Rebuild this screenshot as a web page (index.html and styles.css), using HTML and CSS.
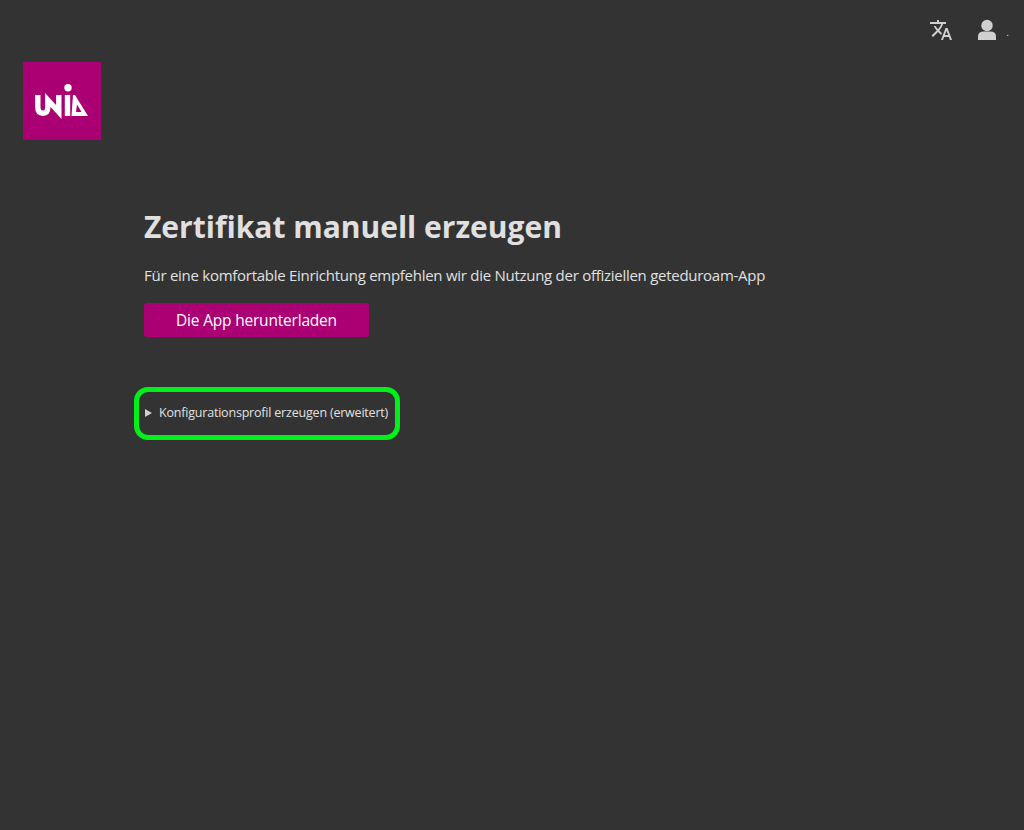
FILE: index.html
```html
<!DOCTYPE html>
<html lang="de">
<head>
<meta charset="utf-8">
<title>Zertifikat manuell erzeugen</title>
<link rel="stylesheet" href="styles.css">
</head>
<body>
<header class="topbar">
  <button class="icon-btn" aria-label="Sprache">
    <svg viewBox="0 0 24 24" width="24" height="24"><path d="M12.87 15.07l-2.54-2.51.03-.03A17.52 17.52 0 0 0 14.07 6H17V4h-7V2H8v2H1v1.99h11.17C11.5 7.92 10.44 9.75 9 11.35 8.07 10.32 7.3 9.19 6.69 8h-2c.73 1.63 1.73 3.17 2.98 4.56l-5.09 5.02L4 19l5-5 3.11 3.11.76-2.04zM18.5 10h-2L12 22h2l1.12-3h4.75L21 22h2l-4.5-12zm-2.62 7l1.62-4.33L19.12 17h-3.24z"/></svg>
  </button>
  <button class="icon-btn user-btn" aria-label="Konto">
    <svg viewBox="0 0 20 22" width="20" height="22"><circle cx="10" cy="6.500" r="5.700"/><path d="M1 21V17.500Q1 12.500 7 12.500H13Q19 12.500 19 17.500V21Z"/></svg>
    <span class="user-name">.</span>
  </button>
</header>
<div class="logo">
  <svg viewBox="0 0 78 78" width="78" height="78">
    <rect width="78" height="78" fill="#ab0074"/>
    <path class="logo-stroke" d="M14.800 33V45Q14.800 51.200 20 51.200Q24.800 51.200 24.800 45V38L35.800 50V33"/>
    <rect class="logo-fill" x="41.800" y="33" width="5.400" height="21"/>
    <circle class="logo-fill" cx="45" cy="25.800" r="3.700"/>
    <path class="logo-fill" fill-rule="evenodd" d="M48.500 54L50 33H52L65 54ZM54 42.500L53 50H58.500Z"/>
  </svg>
</div>
<main class="content">
  <h1>Zertifikat manuell erzeugen</h1>
  <p class="lead">Für eine komfortable Einrichtung empfehlen wir die Nutzung der offiziellen geteduroam-App</p>
  <a class="app-btn" href="#">Die App herunterladen</a>
  <div class="highlight">
    <span class="arrow"></span>
    <span class="summary">Konfigurationsprofil erzeugen (erweitert)</span>
  </div>
</main>
</body>
</html>
```
FILE: styles.css
```css
* { box-sizing: border-box; }
html, body { height: 100%; }
body {
  margin: 0;
  background: #333333;
  color: #e0e0e0;
  font-family: "Open Sans", "Noto Sans", sans-serif;
  overflow: hidden;
}
.topbar {
  display: flex;
  justify-content: flex-end;
  align-items: center;
  gap: 24px;
  height: 62px;
  padding: 0 15px 2px 0;
}
.icon-btn {
  display: flex;
  align-items: center;
  padding: 0;
  border: 0;
  background: none;
  color: #d0d0d0;
}
.icon-btn svg { fill: #d0d0d0; display: block; }
.user-btn { gap: 9px; }
.user-name { font-size: 10px; line-height: 10px; margin-top: 6px; }
.logo { margin-left: 23px; width: 78px; height: 78px; }
.logo svg { display: block; }
.logo-fill { fill: #fff; }
.logo-stroke { fill: none; stroke: #fff; stroke-width: 5.4; }
.content { padding: 66px 0 0 144px; }
h1 {
  margin: 0;
  font-size: 30px;
  line-height: 42px;
  font-weight: 700;
  color: #e0e0e0;
}
.lead {
  margin: 16px 0 0;
  font-size: 15px;
  line-height: 22px;
  color: #e0e0e0;
  letter-spacing: -0.27px;
}
.app-btn {
  display: flex;
  align-items: center;
  justify-content: center;
  width: 225px;
  height: 34px;
  margin-top: 17px;
  background: #ab0074;
  border-radius: 3px;
  color: #fff;
  font-size: 15.5px;
  text-decoration: none;
  letter-spacing: -0.2px;
}
.highlight {
  display: flex;
  align-items: center;
  gap: 7px;
  width: 266px;
  height: 53px;
  margin: 50px 0 0 -10px;
  padding: 0 0 2px 6px;
  border: 5px solid #00f01a;
  border-radius: 14px;
}
.arrow {
  width: 0;
  height: 0;
  border-left: 7px solid #d0d0d0;
  border-top: 4px solid transparent;
  border-bottom: 4px solid transparent;
}
.summary {
  font-size: 12.5px;
  line-height: 18px;
  color: #e0e0e0;
  letter-spacing: -0.2px;
  white-space: nowrap;
}
```
